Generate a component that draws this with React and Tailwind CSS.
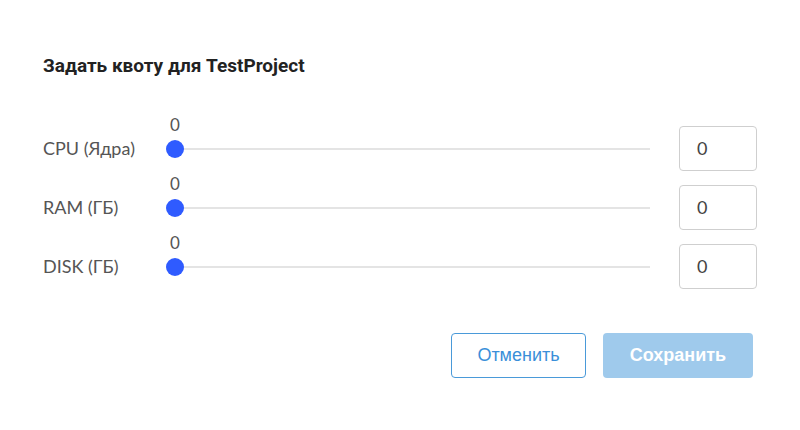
import React from "react";

function Row({ label }) {
  return (
    <div className="flex h-[45px] items-center">
      <div className="w-[123px] text-[18px] text-[#555] font-['Lato',sans-serif]">{label}</div>
      <div className="relative h-[18px] w-[484px]">
        <div className="absolute left-[9px] right-0 top-[8px] h-[2px] bg-[#e4e4e4]" />
        <div className="absolute left-0 top-0 h-[18px] w-[18px] rounded-full bg-[#2f5bff]" />
        <div className="absolute left-[-6px] top-[-27px] w-[30px] text-center text-[17px] leading-[24px] text-[#555] font-['Lato',sans-serif]">0</div>
      </div>
      <div className="ml-[29px] flex h-[45px] w-[78px] items-center rounded-[4px] border border-[#cfcfcf] pl-[17px] text-[18px] text-[#444] font-['Lato',sans-serif]">
        0
      </div>
    </div>
  );
}

export default function App() {
  return (
    <div className="h-[430px] w-[800px] bg-white px-[43px] pt-[54px]">
      <h1 className="text-[19px] font-bold leading-[24px] text-[#222] font-['Roboto',sans-serif]">
        Задать квоту для TestProject
      </h1>
      <div className="mt-[48px] flex flex-col gap-[14px]">
        <Row label="CPU (Ядра)" />
        <Row label="RAM (ГБ)" />
        <Row label="DISK (ГБ)" />
      </div>
      <div className="mt-[44px] flex justify-end gap-[17px] pr-[4px]">
        <button className="h-[45px] w-[135px] rounded-[4px] border border-[#4a9ad9] bg-white text-[18px] text-[#3a8fd9] font-['Liberation_Sans',sans-serif]">
          Отменить
        </button>
        <button className="h-[45px] w-[150px] rounded-[4px] bg-[#9fcaec] text-[18px] font-bold text-white font-['Liberation_Sans',sans-serif]">
          Сохранить
        </button>
      </div>
    </div>
  );
}
